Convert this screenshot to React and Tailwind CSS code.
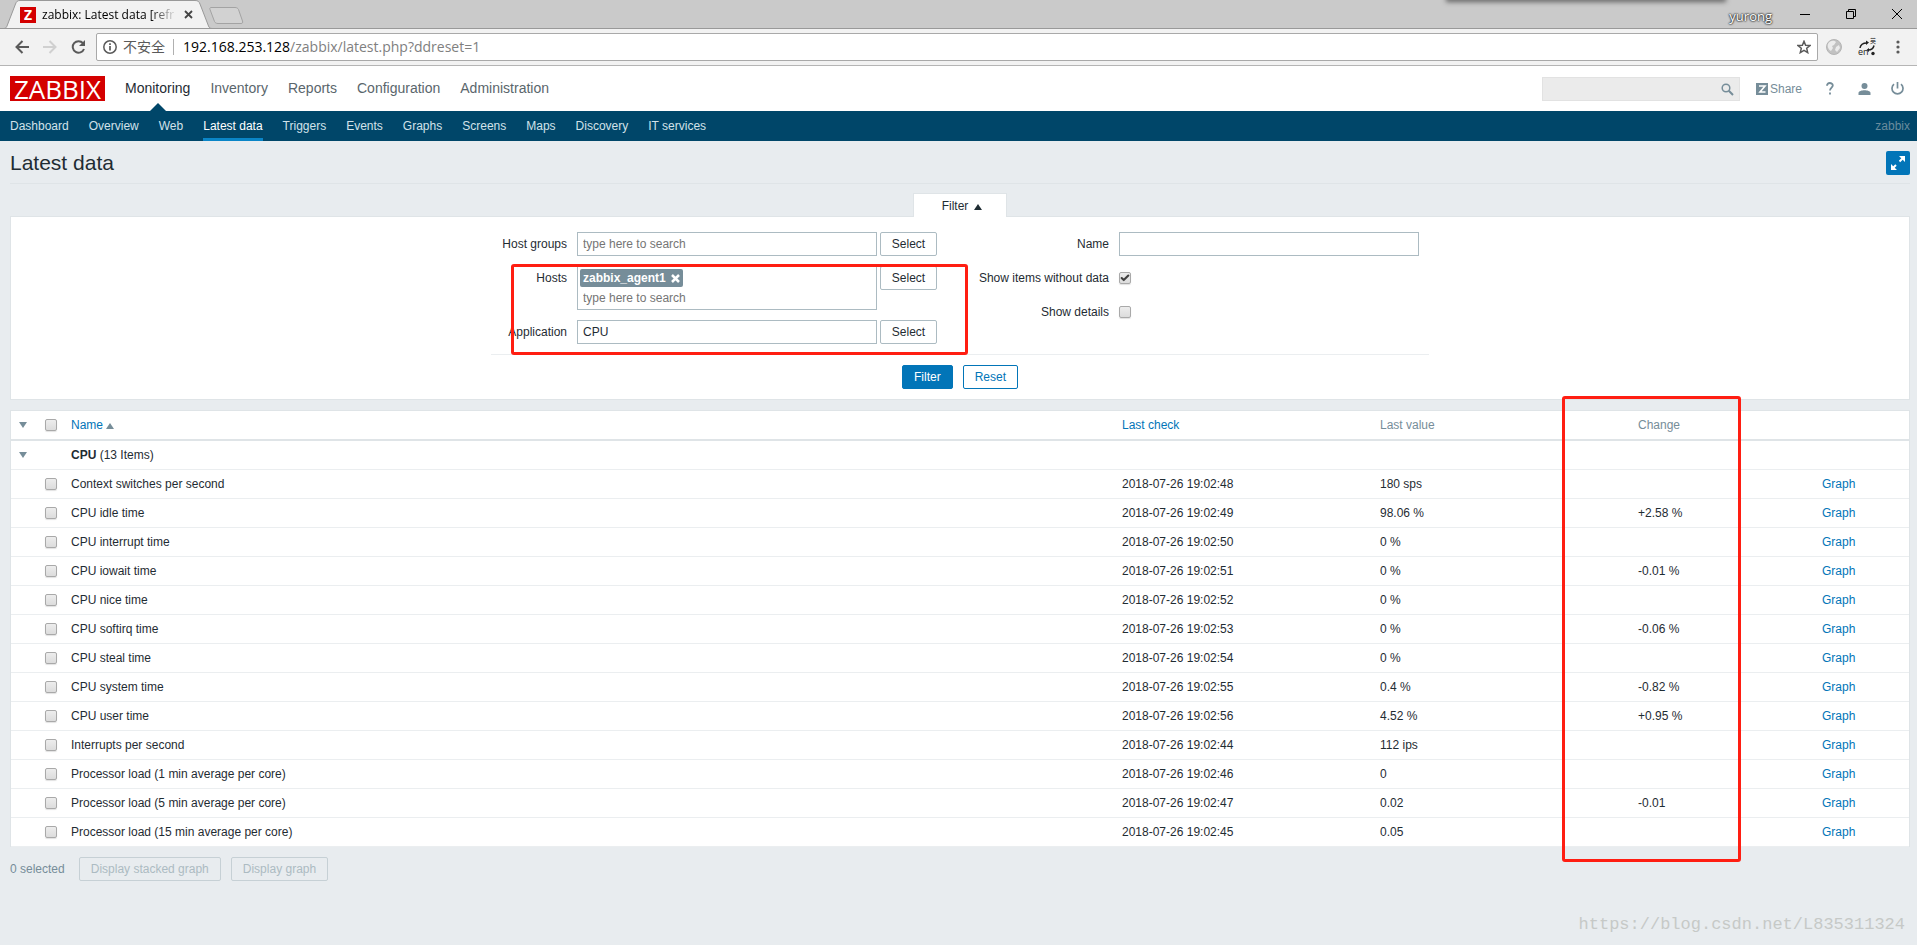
import React, { useState } from "react";
import { Check } from "lucide-react";

const mainMenu = ["Monitoring", "Inventory", "Reports", "Configuration", "Administration"];

const subMenu = [
  "Dashboard",
  "Overview",
  "Web",
  "Latest data",
  "Triggers",
  "Events",
  "Graphs",
  "Screens",
  "Maps",
  "Discovery",
  "IT services",
];

const items = [
  { id: 1, name: "Context switches per second", check: "2018-07-26 19:02:48", value: "180 sps", change: "" },
  { id: 2, name: "CPU idle time", check: "2018-07-26 19:02:49", value: "98.06 %", change: "+2.58 %" },
  { id: 3, name: "CPU interrupt time", check: "2018-07-26 19:02:50", value: "0 %", change: "" },
  { id: 4, name: "CPU iowait time", check: "2018-07-26 19:02:51", value: "0 %", change: "-0.01 %" },
  { id: 5, name: "CPU nice time", check: "2018-07-26 19:02:52", value: "0 %", change: "" },
  { id: 6, name: "CPU softirq time", check: "2018-07-26 19:02:53", value: "0 %", change: "-0.06 %" },
  { id: 7, name: "CPU steal time", check: "2018-07-26 19:02:54", value: "0 %", change: "" },
  { id: 8, name: "CPU system time", check: "2018-07-26 19:02:55", value: "0.4 %", change: "-0.82 %" },
  { id: 9, name: "CPU user time", check: "2018-07-26 19:02:56", value: "4.52 %", change: "+0.95 %" },
  { id: 10, name: "Interrupts per second", check: "2018-07-26 19:02:44", value: "112 ips", change: "" },
  { id: 11, name: "Processor load (1 min average per core)", check: "2018-07-26 19:02:46", value: "0", change: "" },
  { id: 12, name: "Processor load (5 min average per core)", check: "2018-07-26 19:02:47", value: "0.02", change: "-0.01" },
  { id: 13, name: "Processor load (15 min average per core)", check: "2018-07-26 19:02:45", value: "0.05", change: "" },
];

const inputClass =
  "w-[300px] h-6 px-[5px] bg-white border border-[#acbbc2] placeholder:text-[#757575] outline-none";
const selectButtonClass =
  "w-[57px] h-6 ml-[3px] bg-white border border-[#acbbc2] rounded-[2px] shrink-0";
const cellClass = "px-[5px] border-b border-[#ebeef0] text-left font-normal";
const headClass = "px-[5px] border-b-2 border-[#dfe4e7] text-left font-normal text-[#768d99]";

function Checkbox(props) {
  return (
    <span className="relative block w-3 h-3">
      <input
        type="checkbox"
        {...props}
        className="peer block appearance-none w-3 h-3 border border-[#a9a9a9] rounded-[2px] bg-linear-to-b from-[#ededed] to-[#dcdcdc] shadow-[0_1px_1px_rgba(0,0,0,0.12)]"
      />
      <Check
        size={10}
        strokeWidth={5}
        className="absolute left-px top-px text-[#404040] pointer-events-none invisible peer-checked:visible"
      />
    </span>
  );
}

function Triangle({ up, className }) {
  return (
    <svg viewBox="0 0 8 6" width="8" height="6" className={className} fill="currentColor">
      <path d={up ? "M4 0 8 6H0z" : "M0 0h8L4 6z"} />
    </svg>
  );
}

function BrowserBar() {
  return (
    <div className="font-['Open_Sans','Noto_Sans_CJK_SC',sans-serif]">
      {/* tab strip */}
      <div className="relative h-[29px] flex bg-[#cacaca] border-b border-[#999] overflow-hidden">
        <div className="absolute -top-1 right-[192px] w-[278px] h-1 bg-[#777] shadow-[0_1px_5px_1px_rgba(0,0,0,0.5)]" />
        <div className="relative w-[244px] h-[29px] shrink-0">
          <svg width="244" height="29" viewBox="0 0 244 29" className="absolute inset-0" fill="none">
            <path d="M0 28.5H4C6 28.5 6.500 27 7 26L15.500 4C16.500 1.500 17.500.5 20 .5H195C198 .5 199 1.500 200 4L208.500 26C209 27.500 210 28.500 212 28.500V29H0z" fill="#f2f2f2" />
            <path d="M0 28.5H4C6 28.5 6.500 27 7 26L15.500 4C16.500 1.500 17.500.5 20 .5H195C198 .5 199 1.500 200 4L208.500 26C209 27.500 210 28.500 212 28.500H244" stroke="#999" />
            <path d="M211 7.500H235C237 7.500 238 8.500 238.500 9.500L242.500 21C243 22.500 242.500 23.500 241 23.500H218C216 23.500 215 22.500 214.500 21.500L210 9.500C209.500 8.500 210 7.500 211 7.500z" fill="#d2d2d2" stroke="#a3a3a3" />
          </svg>
          <div className="relative flex items-center h-[29px] pl-5">
            <span className="w-4 h-4 flex items-center justify-center bg-[#d40000] text-white text-sm font-bold leading-none">
              Z
            </span>
            <span className="ml-[6px] w-[135px] overflow-hidden whitespace-nowrap text-xs bg-linear-to-r from-black from-80% to-transparent bg-clip-text text-transparent">
              zabbix: Latest data [refr
            </span>
            <button aria-label="Close tab" className="ml-[7px]">
              <svg width="9" height="9" viewBox="0 0 9 9" stroke="#444" strokeWidth="1.800">
                <path d="M1 1 8 8M8 1 1 8" />
              </svg>
            </button>
          </div>
        </div>
        <div className="relative ml-auto flex items-center h-[27px] pr-[15px] text-black">
          <span className="mr-7 pt-1 text-[13px] leading-4 text-white [text-shadow:0_0_2px_#000,0_0_2px_#000]">
            yurong
          </span>
          <button aria-label="Minimize" className="mr-9">
            <svg width="10" height="10" viewBox="0 0 10 10" stroke="currentColor">
              <path d="M0 5.500H10" />
            </svg>
          </button>
          <button aria-label="Restore" className="mr-9">
            <svg width="10" height="10" viewBox="0 0 10 10" stroke="currentColor" fill="none">
              <path d="M.5 2.500H7.500V9.500H.5zM2.500 2.500V.5H9.500V7.500H7.500" />
            </svg>
          </button>
          <button aria-label="Close">
            <svg width="10" height="10" viewBox="0 0 10 10" stroke="currentColor">
              <path d="M0 0 10 10M10 0 0 10" />
            </svg>
          </button>
        </div>
      </div>

      {/* address bar */}
      <div className="flex items-center h-[37px] pl-[15px] pr-[17px] bg-[#f2f2f2] border-b border-[#b5b5b5]">
        <button aria-label="Back" className="mr-[14px] text-[#5a5a5a]">
          <svg width="14" height="14" viewBox="0 0 14 14" stroke="currentColor" strokeWidth="2" fill="none">
            <path d="M14 7H2M7.500 1 1.500 7 7.500 13" />
          </svg>
        </button>
        <button aria-label="Forward" className="mr-[14px] text-[#d0d0d0]">
          <svg width="14" height="14" viewBox="0 0 14 14" stroke="currentColor" strokeWidth="2" fill="none">
            <path d="M0 7H12M6.500 1 12.500 7 6.500 13" />
          </svg>
        </button>
        <button aria-label="Reload" className="mr-[10px] text-[#5a5a5a]">
          <svg width="15" height="14" viewBox="0 0 15 14" fill="none">
            <path d="M12 3.200A5.800 5.800 0 1 0 13 9" stroke="currentColor" strokeWidth="2" />
            <path d="M14 0V6H8z" fill="currentColor" />
          </svg>
        </button>
        <div className="flex items-center flex-1 h-7 pl-[6px] pr-[6px] bg-white border border-[#a9a9a9] rounded-[2px] text-sm">
          <svg width="14" height="14" viewBox="0 0 14 14" fill="none" stroke="#5a5a5a">
            <circle cx="7" cy="7" r="6.200" strokeWidth="1.500" />
            <path d="M7 6V10.500M7 3.300V5" strokeWidth="1.700" />
          </svg>
          <span className="ml-[6px] text-[#5a5a5a] leading-5">不安全</span>
          <span className="w-px h-4 mx-2 bg-[#b0b0b0]" />
          <span className="flex-1 ml-px text-[#808080] leading-5">
            <span className="text-black">192.168.253.128</span>/zabbix/latest.php?ddreset=1
          </span>
          <button aria-label="Bookmark">
            <svg width="14" height="14" viewBox="0 0 14 14" fill="none" stroke="#5a5a5a" strokeWidth="1.500">
              <path d="M7 1.300 8.600 5.200 13 5.500 9.700 8.300 10.700 12.600 7 10.300 3.300 12.600 4.300 8.300 1 5.500 5.400 5.200z" />
            </svg>
          </button>
        </div>
        <button aria-label="Proxy" className="ml-2">
          <svg width="16" height="16" viewBox="0 0 16 16">
            <circle cx="8" cy="8" r="7.500" fill="#c2c2c2" stroke="#b5b5b5" />
            <path d="M2 5C4 1 8 1 10 3L8 6 6 7 7 9 5 12C3 11 1 8 2 5z" fill="#ececec" />
            <path d="M10 8 13 6 14 9 11 13 9 11z" fill="#ececec" />
          </svg>
        </button>
        <button aria-label="Translate" className="relative ml-4 w-[18px] h-[18px]">
          <svg width="18" height="18" viewBox="0 0 18 18" fill="none" stroke="#222">
            <path d="M2 10C2.500 6.500 5 5 9 5M10 12C13.500 12 15.500 10 16 7.500" strokeWidth="1.500" />
            <path d="M8 2.500 11 4.500 8 7zM11 10 8.500 12 11 14z" fill="#222" stroke="none" />
            <circle cx="15" cy="15.500" r="1.700" fill="#222" stroke="none" />
          </svg>
          <span className="absolute left-0 bottom-0 text-[9px] leading-[8px] text-[#222]">en</span>
          <span className="absolute right-0 top-0 text-[6px] leading-[6px] text-[#222]">英</span>
        </button>
        <button aria-label="Menu" className="ml-5">
          <svg width="4" height="14" viewBox="0 0 4 14" fill="#5a5a5a">
            <circle cx="2" cy="2" r="1.600" />
            <circle cx="2" cy="7" r="1.600" />
            <circle cx="2" cy="12" r="1.600" />
          </svg>
        </button>
      </div>
    </div>
  );
}

function Header() {
  return (
    <header>
      <div className="flex items-center h-[45px] pl-[10px] pr-[13px] bg-white text-[#768d99]">
        <a
          href="#dashboard"
          className="w-[95px] h-[25px] flex items-center justify-center bg-[#d40000] text-white text-[26px] leading-none font-['Open_Sans',sans-serif]"
        >
          ZABBIX
        </a>
        <nav className="flex h-full ml-5 gap-5 text-sm">
          {mainMenu.map((m, i) => (
            <a
              key={m}
              href={`#${m}`}
              className={`relative flex items-center pb-[2px] ${i === 0 ? "text-[#1f2c33]" : "text-[#5a666c]"}`}
            >
              {m}
              {i === 0 && (
                <svg width="16" height="8" viewBox="0 0 16 8" className="absolute bottom-0 left-1/2 -translate-x-1/2">
                  <path d="M8 0 16 8H0z" fill="#004669" />
                </svg>
              )}
            </a>
          ))}
        </nav>
        <div className="relative ml-auto">
          <input
            type="text"
            aria-label="Search"
            className="block w-[198px] h-6 pl-[5px] pr-7 bg-[#ebebeb] border border-[#e2e2e2] outline-none"
          />
          <button aria-label="Search" className="absolute right-[6px] top-[6px]">
            <svg width="13" height="13" viewBox="0 0 13 13" fill="none" stroke="currentColor">
              <circle cx="5" cy="5" r="3.800" strokeWidth="1.500" />
              <path d="M7.800 7.800 12 12" strokeWidth="2" />
            </svg>
          </button>
        </div>
        <a href="#share" className="flex items-center ml-4">
          <svg width="12" height="12" viewBox="0 0 12 12">
            <path d="M0 0H12V12H0z" fill="currentColor" />
            <path d="M3 3H9L4 9H9.500" fill="none" stroke="#fff" strokeWidth="1.600" />
          </svg>
          <span className="ml-[2px]">Share</span>
        </a>
        <a href="#help" aria-label="Help" className="ml-6">
          <svg width="8" height="13" viewBox="0 0 8 13" fill="none" stroke="currentColor" strokeWidth="1.800">
            <path d="M1 3.800C1 1.800 2.200 1 3.800 1S6.800 2 6.800 3.500C6.800 5.500 4 5.800 4 8.500M4 10.500V12.500" />
          </svg>
        </a>
        <a href="#profile" aria-label="Profile" className="ml-6">
          <svg width="13" height="12" viewBox="0 0 13 12" fill="currentColor">
            <circle cx="6.500" cy="3" r="3" />
            <path d="M.5 12V10C.5 8 4 7.200 6.500 7.200S12.500 8 12.500 10V12z" />
          </svg>
        </a>
        <a href="#logout" aria-label="Sign out" className="ml-5">
          <svg width="13" height="13" viewBox="0 0 13 13" fill="none" stroke="currentColor" strokeWidth="1.700">
            <path d="M3 2.200A5.500 5.500 0 1 0 10 2.200M6.500 0V6.500" />
          </svg>
        </a>
      </div>

      <nav className="flex h-[30px] pl-[10px] pr-[7px] gap-5 bg-[#004669] text-[#d2e2ea]">
        {subMenu.map((m) => (
          <a
            key={m}
            href={`#${m}`}
            className={`flex items-center border-y-[3px] border-t-transparent ${
              m === "Latest data" ? "border-b-[#0a85c7] text-white" : "border-b-transparent"
            }`}
          >
            {m}
          </a>
        ))}
        <span className="ml-auto self-center text-[#6a8c9d]">zabbix</span>
      </nav>
    </header>
  );
}

function FilterForm() {
  const [host, setHost] = useState("zabbix_agent1");
  const [application, setApplication] = useState("CPU");
  const [name, setName] = useState("");
  const [withoutData, setWithoutData] = useState(true);
  const [details, setDetails] = useState(false);

  return (
    <section>
      <div className="flex justify-center">
        <button className="relative -mb-px w-[94px] h-6 pl-1 flex items-center justify-center gap-[6px] bg-white border border-b-0 border-[#dfe4e7]">
          Filter
          <Triangle up className="mt-[3px]" />
        </button>
      </div>
      <div className="bg-white border border-[#dfe4e7] pt-[15px] pb-[10px]">
        <form className="relative w-[938px] mx-auto" onSubmit={(e) => e.preventDefault()}>
          <div className="flex justify-between pr-[10px] pb-[10px] border-b border-[#ebeef0]">
            <div className="flex flex-col gap-[10px]">
              <div className="flex">
                <label htmlFor="groups" className="w-[76px] mr-[10px] leading-6 text-right">
                  Host groups
                </label>
                <input id="groups" className={inputClass} placeholder="type here to search" />
                <button type="button" className={selectButtonClass}>
                  Select
                </button>
              </div>
              <div className="flex items-start">
                <label htmlFor="hosts" className="w-[76px] mr-[10px] leading-6 text-right">
                  Hosts
                </label>
                <div className="w-[300px] h-11 pt-[2px] px-[2px] bg-white border border-[#acbbc2]">
                  {host && (
                    <span className="flex w-fit items-center h-[18px] px-[3px] gap-[5px] bg-[#768d99] rounded-[2px] text-white font-bold">
                      {host}
                      <button type="button" aria-label="Remove" onClick={() => setHost("")}>
                        <svg width="9" height="9" viewBox="0 0 9 9" stroke="#fff" strokeWidth="2.500">
                          <path d="M1 1 8 8M8 1 1 8" />
                        </svg>
                      </button>
                    </span>
                  )}
                  <input
                    id="hosts"
                    className="block w-full h-[22px] px-[3px] placeholder:text-[#757575] outline-none"
                    placeholder="type here to search"
                  />
                </div>
                <button type="button" className={selectButtonClass}>
                  Select
                </button>
              </div>
              <div className="flex">
                <label htmlFor="application" className="w-[76px] mr-[10px] leading-6 text-right">
                  Application
                </label>
                <input
                  id="application"
                  className={inputClass}
                  value={application}
                  onChange={(e) => setApplication(e.target.value)}
                />
                <button type="button" className={selectButtonClass}>
                  Select
                </button>
              </div>
            </div>

            <div className="flex flex-col gap-[10px]">
              <div className="flex">
                <label htmlFor="name" className="w-[140px] mr-[10px] leading-6 text-right">
                  Name
                </label>
                <input
                  id="name"
                  className={inputClass}
                  value={name}
                  onChange={(e) => setName(e.target.value)}
                />
              </div>
              <div className="flex items-center">
                <label htmlFor="without-data" className="w-[140px] mr-[10px] leading-6 text-right">
                  Show items without data
                </label>
                <Checkbox
                  id="without-data"
                  checked={withoutData}
                  onChange={(e) => setWithoutData(e.target.checked)}
                />
              </div>
              <div className="flex items-center">
                <label htmlFor="details" className="w-[140px] mr-[10px] leading-6 text-right">
                  Show details
                </label>
                <Checkbox
                  id="details"
                  checked={details}
                  onChange={(e) => setDetails(e.target.checked)}
                />
              </div>
            </div>
          </div>
          <div className="flex justify-center gap-[10px] pt-[10px]">
            <button className="h-6 px-[11px] bg-[#0275b8] border border-[#0275b8] rounded-[2px] text-white">
              Filter
            </button>
            <button type="reset" className="h-6 px-[11px] bg-white border border-[#0275b8] rounded-[2px] text-[#0275b8]">
              Reset
            </button>
          </div>
          {/* highlight over the hosts and application fields */}
          <div className="absolute left-[20px] top-8 w-[457px] h-[91px] border-[3px] border-[#ff1e12] rounded-[3px] pointer-events-none" />
        </form>
      </div>
    </section>
  );
}

function ItemTable({ selected, setSelected }) {
  const [open, setOpen] = useState(true);

  const toggle = (id) =>
    setSelected(selected.includes(id) ? selected.filter((s) => s !== id) : [...selected, id]);

  return (
    <div className="relative mt-[10px] bg-white border border-b-0 border-[#dfe4e7]">
      <table className="w-full table-fixed border-separate border-spacing-0">
        <colgroup>
          <col className="w-[29px]" />
          <col className="w-[26px]" />
          <col />
          <col className="w-[258px]" />
          <col className="w-[258px]" />
          <col className="w-[184px]" />
          <col className="w-[92px]" />
        </colgroup>
        <thead>
          <tr className="h-[30px]">
            <th className={headClass}>
              <button aria-label="Toggle all" className="block ml-[3px]" onClick={() => setOpen(!open)}>
                <Triangle />
              </button>
            </th>
            <th className={headClass}>
              <Checkbox
                aria-label="Select all"
                checked={selected.length === items.length}
                onChange={(e) => setSelected(e.target.checked ? items.map((r) => r.id) : [])}
              />
            </th>
            <th className={headClass}>
              <a href="#name" className="text-[#0275b8]">
                Name
                <Triangle up className="inline ml-[3px] text-[#768d99]" />
              </a>
            </th>
            <th className={headClass}>
              <a href="#lastcheck" className="text-[#0275b8]">
                Last check
              </a>
            </th>
            <th className={headClass}>Last value</th>
            <th className={headClass}>Change</th>
            <th className={headClass}></th>
          </tr>
        </thead>
        <tbody>
          <tr className="h-[29px]">
            <td className={cellClass}>
              <button
                aria-label="Toggle CPU"
                className="block ml-[3px] text-[#768d99]"
                onClick={() => setOpen(!open)}
              >
                <Triangle />
              </button>
            </td>
            <td className={cellClass}></td>
            <td colSpan={5} className={cellClass}>
              <b>CPU</b> (13 Items)
            </td>
          </tr>
          {open &&
            items.map((r) => (
              <tr key={r.id} className="h-[29px]">
                <td className={cellClass}></td>
                <td className={cellClass}>
                  <Checkbox
                    aria-label={r.name}
                    checked={selected.includes(r.id)}
                    onChange={() => toggle(r.id)}
                  />
                </td>
                <td className={cellClass}>{r.name}</td>
                <td className={cellClass}>{r.check}</td>
                <td className={cellClass}>{r.value}</td>
                <td className={cellClass}>{r.change}</td>
                <td className={cellClass}>
                  <a href={`#graph-${r.id}`} className="text-[#0275b8]">
                    Graph
                  </a>
                </td>
              </tr>
            ))}
        </tbody>
      </table>
      {/* highlight over the change column */}
      <div className="absolute right-[168px] -top-[15px] -bottom-[15px] w-[179px] border-[3px] border-[#ff1e12] rounded-[3px] pointer-events-none" />
    </div>
  );
}

export default function App() {
  const [selected, setSelected] = useState([]);
  const footerButton =
    "h-6 px-[11px] border border-[#c6d0d5] rounded-[2px] text-[#acbbc2]";

  return (
    <div className="min-h-screen flex flex-col bg-[#e8ecef] text-xs text-[#1f2c33] font-['Liberation_Sans',Arial,sans-serif]">
      <BrowserBar />
      <Header />

      <main className="pl-[10px] pr-[7px]">
        <div className="flex items-center justify-between h-[43px] pt-[2px] border-b border-[#dfe4e7]">
          <h1 className="text-[21px]">Latest data</h1>
          <button
            aria-label="Fullscreen"
            className="w-6 h-6 flex items-center justify-center bg-[#0275b8] rounded-[2px]"
          >
            <svg width="14" height="14" viewBox="0 0 14 14" fill="#fff" stroke="#fff" strokeWidth="2">
              <path d="M8.500 5.500 12 2M1.500 12.500 5 9" />
              <path d="M8 0H14V6zM0 8V14H6z" stroke="none" />
            </svg>
          </button>
        </div>
        <div className="mt-[9px]">
          <FilterForm />
        </div>
        <ItemTable selected={selected} setSelected={setSelected} />
        <div className="flex items-center mt-[10px]">
          <span className="mr-[14px] text-[#768d99]">{selected.length} selected</span>
          <button disabled={selected.length === 0} className={`${footerButton} mr-[10px]`}>
            Display stacked graph
          </button>
          <button disabled={selected.length === 0} className={footerButton}>
            Display graph
          </button>
        </div>
      </main>

      <footer className="mt-auto pr-3 pb-2 text-right text-[17px] leading-6 text-[#c6c9c7] font-['Liberation_Mono',monospace]">
        https://blog.csdn.net/L835311324
      </footer>
    </div>
  );
}
